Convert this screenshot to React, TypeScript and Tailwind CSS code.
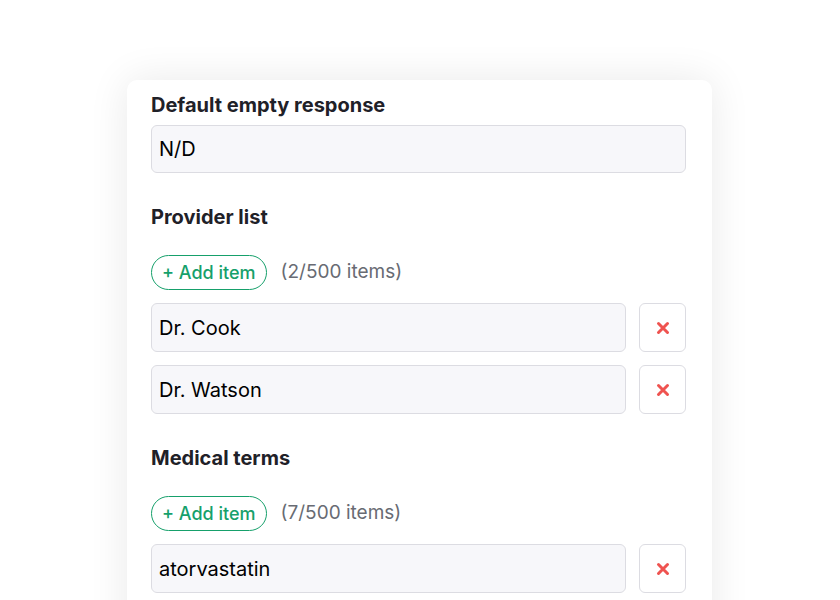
import React from "react";

const inputCls =
  "w-full rounded-md border border-[#dcdce2] bg-[#f7f7fa] pl-[7px] pr-2 text-[20px] text-black outline-none";

function XIcon() {
  return (
    <svg viewBox="0 0 16 16" className="size-4" fill="none">
      <path d="M3.5 3.5l9 9M12.5 3.5l-9 9" stroke="#ef5350" strokeWidth="3" strokeLinecap="round" />
    </svg>
  );
}

function ListField({ label, count, items }: { label: string; count: number; items: string[] }) {
  return (
    <div className="mt-[26px]">
      <div className="text-[20px] font-bold leading-[36px] text-[#1f2128]">{label}</div>
      <div className="mt-[20px] flex items-center gap-[14px]">
        <button className="flex h-[35px] items-center rounded-full border border-[#16a06b] px-[10px] text-[18px] font-medium text-[#16a06b]">
          + Add item
        </button>
        <span className="text-[19px] text-[#686b73]">({count}/500 items)</span>
      </div>
      <div className="mt-[13px] flex flex-col gap-[13px]">
        {items.map((it) => (
          <div key={it} className="flex gap-[13px]">
            <input className={`${inputCls} h-[49px]`} defaultValue={it} />
            <button className="flex h-[49px] w-[47px] shrink-0 items-center justify-center rounded-md border border-[#dcdce2] bg-white">
              <XIcon />
            </button>
          </div>
        ))}
      </div>
    </div>
  );
}

export default function App() {
  return (
    <div className="h-[600px] w-[840px] overflow-hidden bg-white font-['Inter',sans-serif]">
      <div className="ml-[127px] mt-[80px] w-[585px] rounded-[10px] bg-white pb-10 pl-6 pr-[26px] pt-[10px] shadow-[0_0_40px_rgba(0,0,0,0.09)]">
        <div className="text-[20px] font-bold leading-[30px] text-[#1f2128]">Default empty response</div>
        <input className={`${inputCls} mt-[5px] h-12`} defaultValue="N/D" />
        <ListField label="Provider list" count={2} items={["Dr. Cook", "Dr. Watson"]} />
        <ListField label="Medical terms" count={7} items={["atorvastatin", "metformin"]} />
      </div>
    </div>
  );
}
